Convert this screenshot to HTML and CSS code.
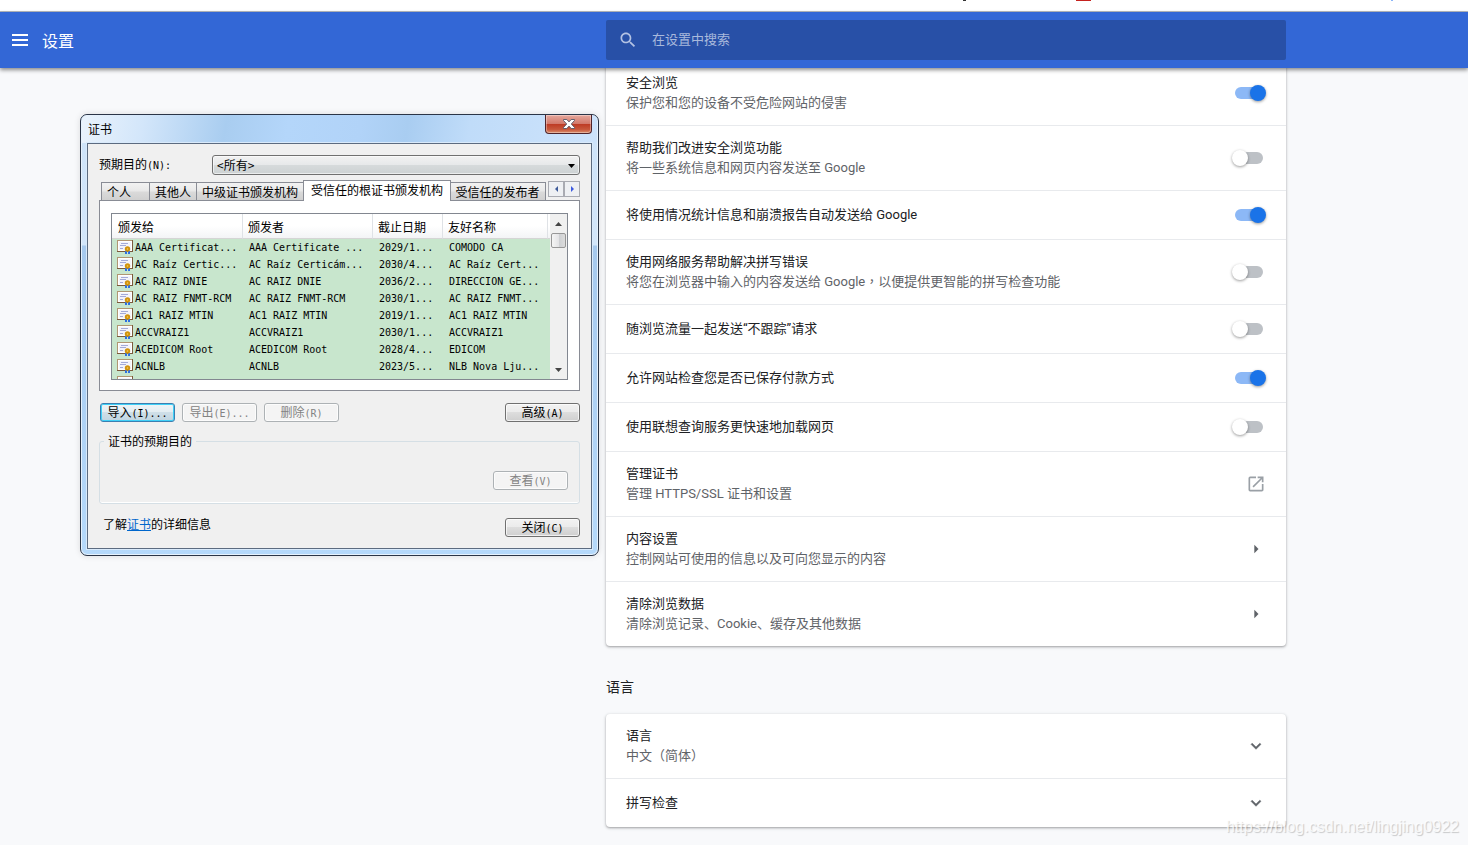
FILE: index.html
```
<!DOCTYPE html>
<html lang="zh-CN">
<head>
<meta charset="utf-8">
<title>设置</title>
<link rel="stylesheet" href="styles.css">
</head>
<body>
<svg class="defs" aria-hidden="true">
  <symbol id="cert" viewBox="0 0 16 16">
    <rect x="0" y="1" width="16" height="12" fill="#7b5a3c"/>
    <rect x="0" y="1" width="15" height="11" fill="#b09672"/>
    <rect x="1" y="2" width="14" height="10" fill="#fff"/>
    <rect x="2" y="3" width="12" height="8" fill="#f3f3fa"/>
    <path d="M4 4.500h7M3 6.500h6M3 9.500h3" stroke="#a3aad8" fill="none"/>
    <path d="M8 12h2v3H8zM11 12h2v3h-2z" fill="#2f6fe0"/>
    <circle cx="10.500" cy="10" r="2.700" fill="#d0920c"/>
    <circle cx="10.500" cy="10" r=".8" fill="#f7d264"/>
  </symbol>
  <symbol id="arrow-right" viewBox="0 0 24 24"><path d="M10 17l5-5-5-5z" fill="#5f6368"/></symbol>
  <symbol id="expand" viewBox="0 0 24 24"><path d="M16.590 8.590L12 13.170 7.410 8.590 6 10l6 6 6-6z" fill="#5f6368" stroke="#5f6368" stroke-width=".6"/></symbol>
</svg>

<div class="browser-edge" aria-hidden="true"><i class="speck dark"></i><i class="speck red"></i><i class="speck blue"></i></div>

<header class="toolbar">
  <div class="brand">
    <button class="menu-button" aria-label="主菜单">
      <svg viewBox="0 0 16 12" width="16" height="12"><path d="M0 0h16v2H0zM0 5h16v2H0zM0 10h16v2H0z" fill="#fff"/></svg>
    </button>
    <h1>设置</h1>
  </div>
  <label class="search">
    <svg viewBox="0 0 24 24" width="20" height="20"><path d="M15.500 14h-.79l-.28-.27C15.410 12.590 16 11.110 16 9.500 16 5.910 13.090 3 9.500 3S3 5.910 3 9.500 5.910 16 9.500 16c1.610 0 3.090-.59 4.230-1.570l.27.28v.79l5 4.990L20.490 19l-4.990-5zm-6 0C7.010 14 5 11.990 5 9.500S7.010 5 9.500 5 14 7.010 14 9.500 11.990 14 9.500 14z" fill="#b3c2e3"/></svg>
    <input type="search" aria-label="在设置中搜索" placeholder="在设置中搜索">
  </label>
</header>

<main class="page">
  <div class="content">
    <section class="card">
      <label class="row"><span class="text"><b>安全浏览</b><small>保护您和您的设备不受危险网站的侵害</small></span><input class="toggle" type="checkbox" checked></label>
      <label class="row"><span class="text"><b>帮助我们改进安全浏览功能</b><small>将一些系统信息和网页内容发送至 Google</small></span><input class="toggle" type="checkbox"></label>
      <label class="row single"><span class="text"><b>将使用情况统计信息和崩溃报告自动发送给 Google</b></span><input class="toggle" type="checkbox" checked></label>
      <label class="row"><span class="text"><b>使用网络服务帮助解决拼写错误</b><small>将您在浏览器中输入的内容发送给 Google<span class="comma" lang="zh-TW">，</span>以便提供更智能的拼写检查功能</small></span><input class="toggle" type="checkbox"></label>
      <label class="row single"><span class="text"><b>随浏览流量一起发送“不跟踪”请求</b></span><input class="toggle" type="checkbox"></label>
      <label class="row single"><span class="text"><b>允许网站检查您是否已保存付款方式</b></span><input class="toggle" type="checkbox" checked></label>
      <label class="row single"><span class="text"><b>使用联想查询服务更快速地加载网页</b></span><input class="toggle" type="checkbox"></label>
      <button class="row"><span class="text"><b>管理证书</b><small>管理 HTTPS/SSL 证书和设置</small></span>
        <svg class="icon" viewBox="0 0 24 24"><path d="M19 19H5V5h7V3H5a2 2 0 0 0-2 2v14a2 2 0 0 0 2 2h14c1.100 0 2-.9 2-2v-7h-2v7zM14 3v2h3.590l-9.830 9.830 1.410 1.410L19 6.410V10h2V3h-7z" fill="#9aa0a6"/></svg></button>
      <button class="row"><span class="text"><b>内容设置</b><small>控制网站可使用的信息以及可向您显示的内容</small></span><svg class="icon"><use href="#arrow-right"/></svg></button>
      <button class="row"><span class="text"><b>清除浏览数据</b><small>清除浏览记录、Cookie、缓存及其他数据</small></span><svg class="icon"><use href="#arrow-right"/></svg></button>
    </section>
    <h2>语言</h2>
    <section class="card">
      <button class="row"><span class="text"><b>语言</b><small>中文（简体）</small></span><svg class="icon"><use href="#expand"/></svg></button>
      <button class="row single"><span class="text"><b>拼写检查</b></span><svg class="icon"><use href="#expand"/></svg></button>
    </section>
  </div>
</main>

<div class="dialog" role="dialog" aria-labelledby="dialog-title">
  <div class="titlebar">
    <span id="dialog-title">证书</span>
    <button class="close" aria-label="关闭">
      <svg viewBox="0 0 12 10" width="12" height="10"><path d="M.5.5h3.300L6 2.900 8.200.5h3.300v1L8.300 5l3.200 3.500v1H8.200L6 7.100 3.800 9.500H.5v-1L3.700 5 .5 1.500z" fill="#fff" stroke="#535666" stroke-width=".9"/></svg>
    </button>
  </div>
  <div class="client">
    <div class="purpose">
      <label for="purpose">预期目的<span class="mono">(N):</span></label>
      <div class="combo">
        <select id="purpose"><option>&lt;所有&gt;</option></select>
        <svg viewBox="0 0 7 4" width="7" height="4"><path d="M0 0h7L3.500 4z"/></svg>
      </div>
    </div>
    <div class="tabs" role="tablist">
      <button role="tab" class="tab personal">个人</button>
      <button role="tab" class="tab">其他人</button>
      <button role="tab" class="tab">中级证书颁发机构</button>
      <button role="tab" class="tab active" aria-selected="true">受信任的根证书颁发机构</button>
      <button role="tab" class="tab last">受信任的发布者</button>
      <span class="tab-scroll">
        <button aria-label="向左"><svg viewBox="0 0 3 6" width="3" height="6"><path d="M3 0v6L0 3z" fill="#3d5a9a"/></svg></button>
        <button aria-label="向右"><svg viewBox="0 0 3 6" width="3" height="6"><path d="M0 0v6l3-3z" fill="#3d5ae0"/></svg></button>
      </span>
    </div>
    <div class="panel">
      <div class="list">
        <table>
          <colgroup><col class="c-to"><col class="c-by"><col class="c-date"><col class="c-name"><col></colgroup>
          <thead><tr><th>颁发给</th><th>颁发者</th><th>截止日期</th><th>友好名称</th><th></th></tr></thead>
          <tbody>
            <tr><td><svg><use href="#cert"/></svg>AAA Certificat...</td><td>AAA Certificate ...</td><td>2029/1...</td><td>COMODO CA</td><td></td></tr>
            <tr><td><svg><use href="#cert"/></svg>AC Raíz Certic...</td><td>AC Raíz Certicám...</td><td>2030/4...</td><td>AC Raíz Cert...</td><td></td></tr>
            <tr><td><svg><use href="#cert"/></svg>AC RAIZ DNIE</td><td>AC RAIZ DNIE</td><td>2036/2...</td><td>DIRECCION GE...</td><td></td></tr>
            <tr><td><svg><use href="#cert"/></svg>AC RAIZ FNMT-RCM</td><td>AC RAIZ FNMT-RCM</td><td>2030/1...</td><td>AC RAIZ FNMT...</td><td></td></tr>
            <tr><td><svg><use href="#cert"/></svg>AC1 RAIZ MTIN</td><td>AC1 RAIZ MTIN</td><td>2019/1...</td><td>AC1 RAIZ MTIN</td><td></td></tr>
            <tr><td><svg><use href="#cert"/></svg>ACCVRAIZ1</td><td>ACCVRAIZ1</td><td>2030/1...</td><td>ACCVRAIZ1</td><td></td></tr>
            <tr><td><svg><use href="#cert"/></svg>ACEDICOM Root</td><td>ACEDICOM Root</td><td>2028/4...</td><td>EDICOM</td><td></td></tr>
            <tr><td><svg><use href="#cert"/></svg>ACNLB</td><td>ACNLB</td><td>2023/5...</td><td>NLB Nova Lju...</td><td></td></tr>
            <tr><td><svg><use href="#cert"/></svg></td><td></td><td></td><td></td><td></td></tr>
          </tbody>
        </table>
        <div class="scrollbar" aria-hidden="true">
          <svg viewBox="0 0 7 4" width="7" height="4"><path d="M0 4h7L3.500 0z" fill="#444"/></svg>
          <i></i>
          <svg class="down" viewBox="0 0 7 4" width="7" height="4"><path d="M0 0h7L3.500 4z" fill="#444"/></svg>
        </div>
      </div>
    </div>
    <div class="actions">
      <button class="win focus">导入<span class="mono">(I)...</span></button>
      <button class="win" disabled>导出<span class="mono">(E)...</span></button>
      <button class="win" disabled>删除<span class="mono">(R)</span></button>
      <button class="win end">高级<span class="mono">(A)</span></button>
    </div>
    <fieldset>
      <legend>证书的预期目的</legend>
      <button class="win" disabled>查看<span class="mono">(V)</span></button>
    </fieldset>
    <div class="footer">
      <p>了解<a href="#">证书</a>的详细信息</p>
      <button class="win">关闭<span class="mono">(C)</span></button>
    </div>
  </div>
</div>

<div class="watermark">https://blog.csdn.net/lingjing0922</div>
</body>
</html>
```
FILE: styles.css
```
* { box-sizing: border-box; }
body {
  margin: 0;
  height: 100vh;
  overflow: hidden;
  display: flex;
  flex-direction: column;
  background: #f8f9fb;
  color: #202124;
  font: 13px/20px Roboto, "Noto Sans CJK SC", sans-serif;
}
button { font: inherit; color: inherit; margin: 0; padding: 0; border: 0; background: none; }
.defs { position: absolute; width: 0; height: 0; }

/* bottom edge of the browser chrome */
.browser-edge {
  flex: none;
  position: relative;
  height: 12px;
  background: #fff;
  border-bottom: 1px solid #b6b9be;
}
.speck { position: absolute; top: 0; height: 1px; }
.speck.dark { left: 963px; width: 3px; background: #333; }
.speck.red { left: 1076px; width: 15px; background: #c5221f; }
.speck.blue { left: 1391px; width: 2px; background: #8ab4f8; }

.toolbar, .page {
  display: grid;
  grid-template-columns: minmax(0, 606fr) minmax(0, 680px) minmax(0, 182fr);
}
.toolbar {
  flex: none;
  position: relative;
  z-index: 1;
  height: 56px;
  align-items: center;
  background: #3367d6;
  box-shadow: 0 2px 4px rgba(0, 0, 0, .45);
}
.brand { display: flex; align-items: center; gap: 14px; padding-left: 12px; color: #fff; }
.menu-button { display: flex; }
h1 { margin: 0; padding-top: 4px; font-size: 16px; line-height: 24px; font-weight: 400; }
.search {
  display: flex;
  align-items: center;
  gap: 14px;
  height: 40px;
  padding: 0 12px;
  border-radius: 2px;
  background: #2850a7;
}
.search input {
  flex: 1;
  padding: 0;
  border: 0;
  outline: 0;
  background: none;
  color: #fff;
  font: inherit;
}
.search input::placeholder { color: #a9b9dc; }

.content { grid-column: 2; margin-top: -7px; }
.card {
  border-radius: 4px;
  background: #fff;
  box-shadow: 0 1px 2px rgba(60, 64, 67, .35), 0 1px 3px 1px rgba(60, 64, 67, .12);
}
.row {
  display: flex;
  align-items: center;
  justify-content: space-between;
  width: 100%;
  height: 64px;
  padding: 0 20px;
  text-align: left;
}
.row.single { height: 48px; }
.row + .row { border-top: 1px solid #e8eaed; height: 65px; }
.row + .row.single { height: 49px; }
.row b, .row small { display: block; font-size: 13px; font-weight: 400; }
.row small { color: #5f6368; }
.comma { font-family: "Noto Sans CJK TC", sans-serif; line-height: 1; }
.icon { width: 20px; height: 20px; }
.toggle {
  appearance: none;
  position: relative;
  width: 28px;
  height: 12px;
  margin: 0 3px;
  border-radius: 6px;
  background: #bdc1c6;
}
.toggle::before {
  content: "";
  position: absolute;
  top: -2px;
  left: -3px;
  width: 16px;
  height: 16px;
  border-radius: 50%;
  background: #fff;
  box-shadow: 0 1px 3px rgba(0, 0, 0, .4);
}
.toggle:checked { background: #8cb8f6; }
.toggle:checked::before { left: 15px; background: #1a73e8; }
h2 { margin: 31px 0 17px; font-size: 14px; line-height: 20px; font-weight: 400; }

/* certificate window */
.dialog {
  position: absolute;
  z-index: 2;
  left: 80px;
  top: 114px;
  width: 519px;
  padding: 0 6px 6px;
  border: 1px solid #2b3547;
  border-radius: 7px;
  background: linear-gradient(#cde3f9 0, #d3e6fa 130px, #a6c9ee 131px, #b5d9fb 100%);
  box-shadow: inset 0 0 0 1px #e6f2fd, 0 0 6px rgba(0, 0, 0, .12);
  color: #000;
  font: 12px/16px "Noto Sans CJK SC", sans-serif;
}
.titlebar {
  display: flex;
  justify-content: space-between;
  align-items: center;
  height: 28px;
  margin: 0 -5px;
  padding: 0 5px 0 6px;
  border-radius: 6px 6px 0 0;
  background: linear-gradient(100deg, #eaf3fc 0, #d3e6fa 12%, #a9cdf0 28%, #b4d6fa 40%, #b1d3f8 54%, #a9cdf1 63%, #c0dcf9 75%, #cde3fb 100%);
}
.close {
  align-self: flex-start;
  display: flex;
  align-items: center;
  justify-content: center;
  width: 47px;
  height: 19px;
  border: 1px solid #50242a;
  border-top: 0;
  border-radius: 0 0 4px 4px;
  background: linear-gradient(#e6a89d, #d2796b 48%, #bd3a23 50%, #c7573b 80%, #dc8f6c);
  box-shadow: inset 0 0 0 1px rgba(255, 255, 255, .35);
}
.client {
  padding: 11px;
  border: 1px solid #5c6b80;
  background: #f0f0f0;
  box-shadow: 0 0 0 1px #d9eafb;
}
.mono, td { font-family: "DejaVu Sans Mono", monospace; font-size: 10px; }
.purpose { display: flex; align-items: center; justify-content: space-between; }
.combo { position: relative; width: 368px; }
.combo svg { position: absolute; right: 5px; top: 9px; }
.combo select {
  display: block;
  appearance: none;
  width: 100%;
  height: 20px;
  padding: 0 4px;
  border: 1px solid #707070;
  border-radius: 3px;
  background: linear-gradient(#f2f2f2, #e7e9ea 48%, #d6dadb 52%, #cdd2d3);
  box-shadow: inset 0 0 0 1px rgba(255, 255, 255, .6);
  color: #000;
  font: inherit;
}
.tabs { display: flex; align-items: flex-end; height: 20px; margin-top: 5px; padding-left: 2px; }
.tab {
  flex: none;
  height: 18px;
  padding: 0 4px 0 5px;
  border: 1px solid #898c95;
  border-bottom: 0;
  background: linear-gradient(#f2f2f2, #e8e8e8 48%, #dadada 52%, #d0d0d0);
  white-space: nowrap;
}
.tab + .tab { margin-left: -1px; padding-right: 5px; }
.tab.personal { width: 49px; padding-right: 18px; }
.tab.active {
  position: relative;
  height: 21px;
  width: 148px;
  padding: 0 6px 2px;
  margin-bottom: -1px;
  background: #fff;
}
.tab.last { width: 96px; padding: 0 5px 0 4px; }
.tab-scroll { display: flex; align-self: flex-start; margin: 1px 0 0 auto; }
.tab-scroll button {
  display: flex;
  align-items: center;
  justify-content: center;
  width: 16px;
  height: 16px;
  border: 1px solid #a9abb2;
  background: #eef0f3;
}
.panel { padding: 12px 11px 10px; border: 1px solid #898c95; background: #fff; }
.list {
  display: flex;
  height: 167px;
  overflow: hidden;
  border: 1px solid #828790;
  background: #c8e6cd;
}
table { flex: 1; width: 0; table-layout: fixed; border-collapse: separate; border-spacing: 0; align-self: flex-start; }
.c-to { width: 131px; }
.c-by { width: 130px; }
.c-date { width: 70px; }
.c-name { width: 105px; }
th {
  height: 25px;
  padding: 2px 5px 0;
  border-right: 1px solid #dfe2e6;
  border-bottom: 1px solid #d5d5d5;
  background: linear-gradient(#fff 50%, #f3f4f6);
  font-weight: 400;
  text-align: left;
}
th:first-child { padding-left: 6px; }
th:last-child { border-right: 0; padding: 0; }
td { height: 17px; padding: 0 6px; line-height: 17px; white-space: nowrap; }
td:first-child { padding: 0 0 0 5px; }
td:last-child { padding: 0; }
td svg { width: 16px; height: 16px; margin-right: 2px; vertical-align: top; }
.scrollbar {
  display: flex;
  flex-direction: column;
  align-items: center;
  width: 17px;
  padding: 8px 0 7px;
  background: #f0f0f0;
}
.scrollbar i {
  width: 15px;
  height: 15px;
  margin-top: 7px;
  border: 1px solid #979797;
  border-radius: 2px;
  background: linear-gradient(90deg, #f5f5f5, #e4e4e6 50%, #cdcfd2 52%, #dcdcdc);
}
.scrollbar .down { margin-top: auto; }
.actions { display: flex; gap: 7px; margin: 12px 0 0 1px; }
.win {
  width: 75px;
  height: 19px;
  border: 1px solid #707070;
  border-radius: 3px;
  background: linear-gradient(#f2f2f2, #ebebeb 48%, #dddddd 50%, #cfcfcf);
  box-shadow: inset 0 0 0 1px rgba(255, 255, 255, .7);
  line-height: 16px;
}
.win:disabled { border-color: #adb2b5; background: #f4f4f4; color: #838383; }
.win.focus {
  border-color: #3c7fb1;
  background: linear-gradient(#eef4f7, #e3edf2 48%, #cfdfe8 50%, #c0d5e1);
  box-shadow: inset 0 0 0 1px #3fd0f7;
}
.end { margin-left: auto; }
fieldset {
  display: flex;
  justify-content: flex-end;
  margin: 11px 0 0;
  padding: 22px 11px 13px 8px;
  border: 1px solid #d5dfe5;
  border-radius: 3px;
  box-shadow: inset 0 -1px #fff;
}
legend { margin-left: -4px; padding: 0 4px; line-height: 16px; }
.footer { display: flex; align-items: flex-start; justify-content: space-between; margin-top: 14px; }
.footer p { margin: 0 0 0 4px; line-height: 12px; }
.footer a { color: #06c; }

.watermark {
  position: absolute;
  z-index: 3;
  right: 9px;
  bottom: 8px;
  color: rgba(255, 255, 255, .8);
  font: 16px/20px "Liberation Sans", sans-serif;
  text-shadow: 1px 1px 1px rgba(0, 0, 0, .2);
}
```
